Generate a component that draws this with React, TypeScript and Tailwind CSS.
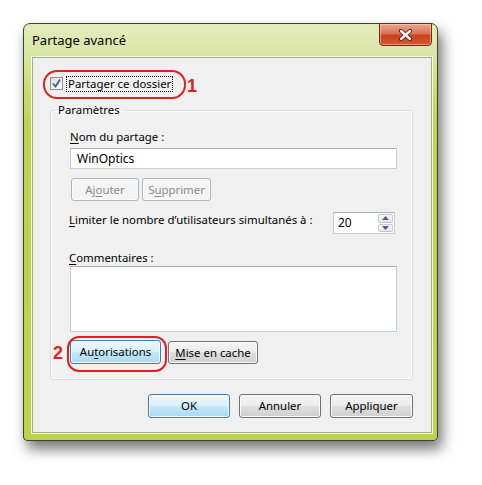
import React from 'react';

type Kind = 'normal' | 'default' | 'disabled';

const btnKind: Record<Kind, string> = {
  normal:
    'border-[#707070] bg-[linear-gradient(180deg,#f4f4f4_0%,#ececec_48%,#dedede_52%,#d0d0d0_100%)] shadow-[inset_0_0_0_1px_#fbfbfb] text-black',
  default:
    'border-[#3c7fb1] bg-[linear-gradient(180deg,#ecf7fd_0%,#dcf1fc_48%,#c3e7fb_52%,#aad9f3_100%)] shadow-[inset_0_0_0_1px_#f4fbff] text-black',
  disabled: 'border-[#b0b4b7] bg-[#f4f4f4] shadow-[inset_0_0_0_1px_#fbfbfb] text-[#8a8a8a]',
};

const Btn: React.FC<{ kind?: Kind; className?: string; children: React.ReactNode }> = ({
  kind = 'normal',
  className = '',
  children,
}) => (
  <div
    className={`flex items-center justify-center border rounded-[3px] leading-none ${btnKind[kind]} ${className}`}
  >
    {children}
  </div>
);

const U: React.FC<{ children: React.ReactNode }> = ({ children }) => (
  <span className="underline underline-offset-2 decoration-1">{children}</span>
);

export default function App() {
  return (
    <div className="w-[482px] h-[485px] bg-white overflow-hidden pt-[23px] pl-[23px] font-['Noto_Sans',sans-serif] text-[11.4px] text-black">
      {/* window */}
      <div className="w-[415px] h-[418px] flex flex-col rounded-t-[7px] rounded-b-[4px] border border-[#3a4628] bg-[linear-gradient(180deg,#e4ecbd_0px,#dbe6a6_30px,#cbdd70_65px,#bfd44e_100px,#bcd24a_100%)] shadow-[4px_8px_14px_rgba(0,0,0,0.55)]">
        {/* title bar */}
        <div className="h-[33px] shrink-0 flex items-start justify-between">
          <div className="pl-[8px] h-[33px] flex items-center text-[13px]">Partage avancé</div>
          <div className="-mt-px mr-[5px] w-[53px] h-[23px] flex items-center justify-center rounded-b-[4px] border border-[#6e2a17] bg-[linear-gradient(180deg,#eba88f_0%,#dc7253_45%,#c9431d_55%,#d5562e_100%)] shadow-[inset_0_0_0_1px_rgba(255,220,200,0.5)]">
            <svg width="15" height="12" viewBox="0 0 15 12">
              <path d="M3 2 L12 10 M12 2 L3 10" stroke="#5a2010" strokeWidth="4.2" strokeLinecap="round" />
              <path d="M3 2 L12 10 M12 2 L3 10" stroke="#ffffff" strokeWidth="2.4" strokeLinecap="round" />
            </svg>
          </div>
        </div>

        {/* client area */}
        <div className="relative flex-1 ml-[8px] mr-[5px] mb-[7px] bg-[#f0f0f0] border border-[#a3ad86] shadow-[0_0_0_1px_#f6f9e8] pt-[19px] pl-[17px] pr-[18px] flex flex-col">
          {/* checkbox */}
          <div className="flex items-center h-[13px]">
            <div className="w-[13px] h-[13px] border border-[#8e8f8f] bg-[linear-gradient(135deg,#dcdcdc,#ffffff)] flex items-center justify-center">
              <svg width="11" height="11" viewBox="0 0 11 11">
                <path d="M2 5.5 L4.5 8.5 L9 1.5" fill="none" stroke="#3d5a98" strokeWidth="1.8" />
              </svg>
            </div>
            <div className="ml-[3px] px-px border border-dotted border-black leading-[14px]">
              Partager ce dossier
            </div>
          </div>

          {/* group */}
          <fieldset className="mt-[12px] border border-[#d5dfe5] rounded-[3px] pl-[19px] pr-[15px] pb-[15px] shadow-[inset_0_0_0_1px_#fafafa]">
            <legend className="-ml-[15px] px-[3px] leading-[16px]">Paramètres</legend>
            <div className="pt-[11px] leading-[16px]">
              <U>N</U>om du partage :
            </div>
            <div className="mt-[3px] h-[21px] bg-white border border-[#c8cdd3] border-t-[#abadb3] flex items-center pl-[6px] text-[12px]">
              WinOptics
            </div>
            <div className="mt-[9px] flex gap-[3px] ml-px">
              <Btn kind="disabled" className="w-[68px] h-[23px]">
                Aj<U>o</U>uter
              </Btn>
              <Btn kind="disabled" className="w-[69px] h-[23px]">
                S<U>u</U>pprimer
              </Btn>
            </div>
            <div className="mt-[11px] flex items-start">
              <div className="flex-1 leading-[16px] -ml-px">
                <U>L</U>imiter le nombre d’utilisateurs simultanés à :
              </div>
              <div className="mr-[2px] w-[62px] h-[22px] bg-white border border-[#c8cdd3] border-t-[#abadb3] flex">
                <div className="flex-1 flex items-center pl-[4px] text-[12px]">20</div>
                <div className="w-[17px] flex flex-col gap-px p-px">
                  <div className="flex-1 flex items-center justify-center rounded-[2px] border border-[#c3c8d0] bg-[linear-gradient(180deg,#f6f8fb,#e3e8ef)]">
                    <svg width="7" height="4" viewBox="0 0 7 4">
                      <path d="M0 4 L3.5 0 L7 4 Z" fill="#4d6185" />
                    </svg>
                  </div>
                  <div className="flex-1 flex items-center justify-center rounded-[2px] border border-[#c3c8d0] bg-[linear-gradient(180deg,#f6f8fb,#e3e8ef)]">
                    <svg width="7" height="4" viewBox="0 0 7 4">
                      <path d="M0 0 L3.5 4 L7 0 Z" fill="#4d6185" />
                    </svg>
                  </div>
                </div>
              </div>
            </div>
            <div className="mt-[16px] leading-[16px] -ml-px">
              <U>C</U>ommentaires :
            </div>
            <div className="h-[66px] bg-white border border-[#c8cdd3] border-t-[#abadb3]" />
            <div className="mt-[8px] flex gap-[7px]">
              <Btn kind="default" className="w-[91px] h-[24px]">
                Au<U>t</U>orisations
              </Btn>
              <Btn className="w-[90px] h-[23px] mt-px">
                <U>M</U>ise en cache
              </Btn>
            </div>
          </fieldset>

          {/* dialog buttons */}
          <div className="mt-[14px] flex justify-end gap-[9px]">
            <Btn kind="default" className="w-[82px] h-[24px]">
              OK
            </Btn>
            <Btn className="w-[82px] h-[24px]">Annuler</Btn>
            <Btn className="w-[83px] h-[24px]">Appliquer</Btn>
          </div>

          {/* annotations */}
          <div className="absolute left-[10px] top-[12px] w-[143px] h-[29px] rounded-[14px] border-2 border-[#e0201e]" />
          <div className="absolute left-[154px] top-[17px] text-[18px] font-bold text-[#e0201e] font-['Liberation_Sans',sans-serif] leading-[22px]">
            1
          </div>
          <div className="absolute left-[34px] top-[278px] w-[100px] h-[36px] rounded-[12px] border-2 border-[#e0201e]" />
          <div className="absolute left-[20px] top-[284px] text-[18px] font-bold text-[#e0201e] font-['Liberation_Sans',sans-serif] leading-[22px]">
            2
          </div>
        </div>
      </div>
    </div>
  );
}
